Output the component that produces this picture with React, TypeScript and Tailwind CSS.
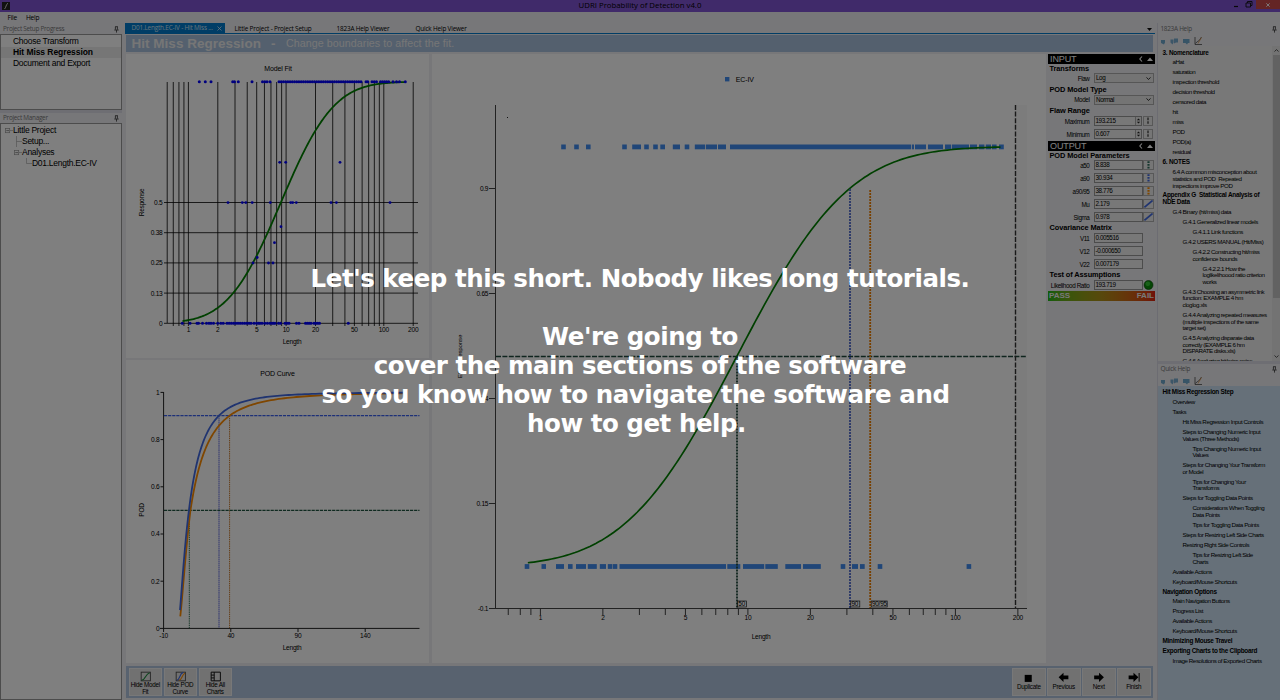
import React from "react";

/* ---------- maths for the probability curves ---------- */
function phi(z: number): number {
  const t = 1 / (1 + 0.3275911 * (Math.abs(z) / Math.SQRT2));
  const a = Math.abs(z) / Math.SQRT2;
  const erf =
    1 -
    ((((1.061405429 * t - 1.453152027) * t + 1.421413741) * t - 0.284496736) * t + 0.254829592) *
      t *
      Math.exp(-a * a);
  return z < 0 ? (1 - erf) / 2 : (1 + erf) / 2;
}

function curve(
  from: number,
  to: number,
  px: (v: number) => number,
  py: (v: number) => number,
  prob: (v: number) => number
): string {
  const n = 160;
  const pts: string[] = [];
  for (let i = 0; i <= n; i++) {
    const v = from * Math.pow(to / from, i / n);
    pts.push(`${px(v).toFixed(2)},${py(prob(v)).toFixed(2)}`);
  }
  return pts.join(" ");
}

const MU = 2.179;
const SIGMA = 0.978;
const pod = (v: number) => phi((Math.log(v) - MU) / SIGMA);
const podBound = (v: number) => {
  const d = Math.log(v) - 2.3;
  return phi(d / (d < 0 ? 0.87 : 1.06));
};

const LOG_TICKS = [0.7, 0.8, 0.9, 1, 2, 3, 4, 5, 6, 7, 8, 9, 10, 20, 30, 40, 50, 60, 70, 80, 90, 100, 200];
const LOG_LABELS = [1, 2, 5, 10, 20, 50, 100, 200];

/* ---------- charts ---------- */
const chartText = "font-['Liberation_Sans'] text-[6.6px] tracking-[-0.25px] fill-black";
const chartTitle = "font-['Liberation_Sans'] text-[7px] tracking-[-0.15px] fill-black";

const FIT_TOP: [number, number][] = [
  [199.3, 199.3], [205.3, 205.3], [211, 211], [232.7, 234.5], [238.3, 238.3], [252, 252], [262.5, 264.8],
  [267, 267], [270, 270], [279, 361], [366, 367.8], [372, 376.5], [380.5, 388.7], [393, 393],
  [396.5, 396.5], [399.5, 399.5], [405.3, 405.3],
];
const FIT_BOTTOM: [number, number][] = [
  [182.3, 182.3], [190, 190], [197, 198.5], [202.5, 202.5], [206.5, 209], [211, 213.5], [217.7, 217.7],
  [220.8, 220.8], [223.2, 223.2], [227, 249], [251, 254], [256.5, 258.5], [260, 262], [264.8, 270],
  [272, 273.5], [275, 276], [278.5, 280.5], [285, 289], [296.5, 299], [305.5, 311], [314, 319.5], [348.3, 348.3],
];
const FIT_MIDDLE: [number, number][] = [
  [279.7, 162.3], [285.7, 162.3], [340, 162.3], [228, 202.6], [242.3, 202.6], [245.8, 202.6], [252.2, 202.6],
  [270.3, 202.6], [290.7, 202.6], [292.7, 202.6], [296.3, 202.6], [331, 202.6], [336.4, 202.6], [390, 202.6],
  [281, 226.7], [274.5, 242.7], [257.2, 257.5], [253, 263], [268.5, 263], [273, 263],
];

function spread(ranges: [number, number][], step: number): number[] {
  const out: number[] = [];
  ranges.forEach(([a, b]) => {
    const n = Math.max(0, Math.round((b - a) / step));
    for (let i = 0; i <= n; i++) out.push(n ? a + ((b - a) * i) / n : a);
  });
  return out;
}

function ModelFit() {
  const px = (v: number) => 188.4 + 97.7 * Math.log10(v);
  const py = (p: number) => 323.3 - 241.6 * p;
  return (
    <svg className="block h-[304px] w-[303px]" viewBox="126 54 303 304">
      <g stroke="#000" strokeWidth="0.8">
        {[0.607, ...LOG_TICKS].map((t) => (
          <line key={t} x1={px(t)} x2={px(t)} y1="82" y2={t === 0.607 ? 323 : 326} />
        ))}
        {[0, 0.125, 0.25, 0.375, 0.5].map((t) => (
          <line key={t} x1="164" x2="418" y1={py(t)} y2={py(t)} />
        ))}
      </g>
      <polyline points={curve(0.87, 165, px, py, pod)} fill="none" stroke="#008000" strokeWidth="1.8" />
      <g fill="#0000ff">
        {spread(FIT_TOP, 2.2).map((x, i) => <circle key={i} cx={x} cy="81.7" r="1.5" />)}
        {spread(FIT_BOTTOM, 2.2).map((x, i) => <circle key={i} cx={x} cy="323.3" r="1.5" />)}
        {FIT_MIDDLE.map(([x, y], i) => <circle key={i} cx={x} cy={y} r="1.4" />)}
      </g>
      <text x="278" y="70.6" textAnchor="middle" className={chartTitle}>Model Fit</text>
      <text x="292" y="344.4" textAnchor="middle" className={chartText}>Length</text>
      <text transform="translate(143.8 202.5) rotate(-90)" textAnchor="middle" className={chartText}>Response</text>
      {LOG_LABELS.map((t) => (
        <text key={t} x={px(t)} y="332.4" textAnchor="middle" className={chartText}>{t}</text>
      ))}
      {[[0, "0"], [0.125, "0.13"], [0.25, "0.25"], [0.375, "0.38"], [0.5, "0.5"]].map(([v, s]) => (
        <text key={s} x="162.5" y={py(Number(v)) + 2.4} textAnchor="end" className={chartText}>{s}</text>
      ))}
    </svg>
  );
}

function PodCurve() {
  const px = (v: number) => 163.6 + (v + 10) * 1.344;
  const py = (p: number) => 628.4 - 236 * p;
  return (
    <svg className="block h-[303px] w-[303px]" viewBox="126 360 303 303">
      <path d="M163.6 392V632M160 628.4H419.5" stroke="#222" strokeWidth="1" fill="none" />
      <g stroke="#222" strokeWidth="1">
        {[0.2, 0.4, 0.6, 0.8, 1].map((t) => <line key={t} x1="160.5" x2="163.6" y1={py(t)} y2={py(t)} />)}
        {[40, 90, 140].map((t) => <line key={t} x1={px(t)} x2={px(t)} y1="628.4" y2="632" />)}
      </g>
      <line x1="189.3" x2="189.3" y1="510.3" y2="628" stroke="#2f6f4f" strokeWidth="1" strokeDasharray="1.4 0.8" />
      <line x1="219" x2="219" y1="415.7" y2="628" stroke="#7f88e8" strokeWidth="1.7" strokeDasharray="1.6 0.5" opacity=".7" />
      <line x1="229.6" x2="229.6" y1="415.7" y2="628" stroke="#c87828" strokeWidth="1" strokeDasharray="1.4 0.8" />
      <line x1="164" x2="419.5" y1="415.6" y2="415.6" stroke="#3a60f0" strokeWidth="1.4" strokeDasharray="3.2 0.9" />
      <line x1="164" x2="419.5" y1="510.4" y2="510.4" stroke="#1f5540" strokeWidth="1.2" strokeDasharray="3.2 0.9" />
      <polyline points={curve(2.4, 168, px, py, podBound)} fill="none" stroke="#ff8c00" strokeWidth="1.8" />
      <polyline points={curve(2.2, 168, px, py, pod)} fill="none" stroke="#4169e1" strokeWidth="1.8" />
      <text x="277.5" y="376" textAnchor="middle" className={chartTitle}>POD Curve</text>
      <text x="292" y="650.2" textAnchor="middle" className={chartText}>Length</text>
      <text transform="translate(143.6 510) rotate(-90)" textAnchor="middle" className={chartText}>POD</text>
      {[0, 0.2, 0.4, 0.6, 0.8, 1].map((v) => (
        <text key={v} x="159.5" y={py(v) + 2.4} textAnchor="end" className={chartText}>{v}</text>
      ))}
      {[-10, 40, 90, 140].map((v) => (
        <text key={v} x={px(v)} y="638" textAnchor="middle" className={chartText}>{v}</text>
      ))}
    </svg>
  );
}

const HIT_BARS: [number, number][] = [
  [561.2, 565.8], [574.2, 578.8], [586, 590.6], [622.2, 626.8], [632.2, 641], [644.2, 648.8], [653.2, 657.8],
  [660.3, 665], [672.8, 680], [684.7, 689.3], [694.8, 705.2], [706, 717], [718, 726], [730, 911], [911.8, 914],
  [915, 926], [928, 943], [945, 951], [951.8, 969], [970, 977], [979, 984.4], [985.8, 991], [992, 996.6], [999, 1003.8],
];
const MISS_BARS: [number, number][] = [
  [524.7, 529.3], [541.5, 546], [556, 564], [568, 572.6], [576, 586], [587.8, 596.8], [599.8, 606], [607.8, 612.3],
  [612.8, 617.3], [619.5, 726], [727.3, 740.3], [743, 764.2], [765.3, 777.8], [785.3, 801], [803, 820.8],
  [840.7, 845.3], [852, 858], [860, 864.7], [877.7, 882.3], [966.6, 971.2],
];

function MainChart() {
  const px = (v: number) => 540.4 + 207.5 * Math.log10(v);
  const py = (p: number) => 566.5 - 420 * p;
  return (
    <svg className="block h-[609px] w-[614px]" viewBox="432 54 614 609">
      <rect x="1015" y="105" width="12" height="503" fill="#f8f8f8" />
      <path d="M495.5 105V608.5M489 608.5H1027" stroke="#444" strokeWidth="1" fill="none" />
      <g stroke="#444" strokeWidth="1">
        {[0.15, 0.4, 0.65, 0.9].map((t) => <line key={t} x1="489" x2="495" y1={py(t)} y2={py(t)} />)}
        {LOG_TICKS.map((t) => <line key={t} x1={px(t)} x2={px(t)} y1="608.5" y2="615" />)}
      </g>
      <rect x="507" y="117" width="1" height="1" fill="#222" />
      <line x1="496" x2="1027" y1="356.5" y2="356.5" stroke="#1f4a3c" strokeWidth="1.6" strokeDasharray="5 1.4" />
      <line x1="1015.5" x2="1015.5" y1="105" y2="608" stroke="#333" strokeWidth="1.4" strokeDasharray="5 1.6" />
      <g fill="#418cf0">
        {HIT_BARS.map(([a, b]) => <rect key={a} x={a} y="144.5" width={b - a} height="4.8" />)}
        {MISS_BARS.map(([a, b]) => <rect key={a} x={a} y="564.1" width={b - a} height="4.8" />)}
        <rect x="725" y="77" width="4.4" height="4.4" />
      </g>
      <polyline points={curve(0.87, 165, px, py, pod)} fill="none" stroke="#008000" strokeWidth="1.7" />
      <line x1="737" x2="737" y1="356.5" y2="608" stroke="#1f4a3c" strokeWidth="1.8" strokeDasharray="1.9 1.1" />
      <line x1="850" x2="850" y1="189" y2="608" stroke="#4f6ad0" strokeWidth="1.8" strokeDasharray="1.9 1.1" />
      <line x1="870.2" x2="870.2" y1="190" y2="608" stroke="#f08000" strokeWidth="1.8" strokeDasharray="1.9 1.1" />
      {[[737.6, 9, "50"], [850.8, 9, "90"], [871.2, 16, "90/95"]].map(([x, w, s]) => (
        <g key={s}>
          <rect x={Number(x)} y="601" width={Number(w)} height="6" fill="none" stroke="#222" strokeWidth="0.7" />
          <text x={Number(x) + 0.7} y="606.2" className="fill-black font-['Liberation_Sans'] text-[6.4px] tracking-[-0.2px]">{s}</text>
        </g>
      ))}
      <text x="735.8" y="81.7" className={chartTitle}>EC-IV</text>
      <text x="761" y="639.2" textAnchor="middle" className={chartText}>Length</text>
      <text transform="translate(462 356.5) rotate(-90)" textAnchor="middle" className="fill-black font-['Liberation_Sans'] text-[6.2px] tracking-[-0.2px]">EC-IV Response</text>
      {LOG_LABELS.map((t) => (
        <text key={t} x={px(t)} y="620.2" textAnchor="middle" className={chartText}>{t}</text>
      ))}
      {[-0.1, 0.15, 0.4, 0.65, 0.9].map((v) => (
        <text key={v} x="488.3" y={py(v) + 2.3} textAnchor="end" className={chartText}>{v}</text>
      ))}
    </svg>
  );
}

/* ---------- small pieces ---------- */
function Pin() {
  return (
    <svg className="h-[7px] w-[5px] shrink-0" viewBox="0 0 5 7">
      <path d="M1.2 .7H3.8M1.4 .7V3.7M3.4 .7V3.7M.3 4H4.7M2.5 4V6.6" stroke="#333" strokeWidth=".8" fill="none" />
    </svg>
  );
}

function PanelHeader({ title, box }: { title: string; box: string }) {
  return (
    <div className={`flex shrink-0 items-center whitespace-nowrap pl-[3px] pr-[3px] pt-px ${box}`}>
      <span className="font-['Open_Sans'] text-[6.4px] leading-none tracking-[-0.28px] text-[#777]">{title}</span>
      <span className="ml-[4px] mr-[14px] h-[3px] flex-1 bg-[radial-gradient(#a8a8a8_0.6px,transparent_0.7px)] bg-[size:2px_1.5px]" />
      <Pin />
    </div>
  );
}

function HelpToolbar() {
  return (
    <div className="flex h-[12px] shrink-0 items-center pl-[2px] pt-px">
      <svg className="h-[10px] w-[46px]" viewBox="0 0 46 10">
        <path d="M1 4h4v2.5l-1 2-3-1.5z" fill="#6ea8cc" />
        <path d="M10.5 3.5h3v3l-1 2-2-2zM14 2.5h4v4h-2l-2 1z" fill="#79add0" />
        <path d="M23 3h6.5v4H28l-1 1.5-1.5-1.5H23z" fill="#6ea8cc" />
        <path d="M35 1v7.5h7" stroke="#333" strokeWidth=".7" fill="none" />
        <path d="M35.5 7.5c2-3 3-1.5 4-3.5l2-3" stroke="#333" strokeWidth=".7" fill="none" />
        <path d="M38 7.5l3.5-6" stroke="#e09a50" strokeWidth=".8" />
      </svg>
    </div>
  );
}

type HelpItem = [number, string];
const INDENT = ["pl-[5px]", "pl-[15px]", "pl-[25px]", "pl-[35px]", "pl-[45px]"];

function HelpList({ items }: { items: HelpItem[] }) {
  return (
    <div className="flex flex-col">
      {items.map(([level, text], i) => (
        <div
          key={i}
          className={`whitespace-pre pb-[3.4px] font-['Liberation_Sans'] leading-[6.6px] text-black ${INDENT[level]} ${
            level === 0 ? "text-[6.4px] font-bold tracking-[-0.24px]" : "text-[6.2px] tracking-[-0.43px]"
          }`}
        >
          {text}
        </div>
      ))}
    </div>
  );
}

const HANDBOOK: HelpItem[] = [
  [0, "3. Nomenclature"], [1, "aHat"], [1, "saturation"], [1, "inspection threshold"], [1, "decision threshold"],
  [1, "censored data"], [1, "hit"], [1, "miss"], [1, "POD"], [1, "POD(a)"], [1, "residual"], [0, "6. NOTES"],
  [1, "6.4 A common misconception about\nstatistics and POD  Repeated\ninspections improve POD"],
  [0, "Appendix G  Statistical Analysis of\nNDE Data"],
  [1, "G.4 Binary (hit/miss) data"], [2, "G.4.1 Generalized linear models"], [3, "G.4.1.1 Link functions"],
  [2, "G.4.2 USERS MANUAL (Hit/Miss)"], [3, "G.4.2.2 Constructing hit/miss\nconfidence bounds"],
  [4, "G.4.2.2.1 How the\nloglikelihoood ratio criterion\nworks"],
  [2, "G.4.3 Choosing an asymmetric link\nfunction: EXAMPLE 4 hm\ncloglog.xls"],
  [2, "G.4.4 Analyzing repeated measures\n(multiple inspections of the same\ntarget set)"],
  [2, "G.4.5 Analyzing disparate data\ncorrectly (EXAMPLE 6 hm\nDISPARATE disks.xls)"],
  [2, "G.4.6 Analyzing hit/miss noise"],
];

const QUICK: HelpItem[] = [
  [0, "Hit Miss Regression Step"], [1, "Overview"], [1, "Tasks"], [2, "Hit Miss Regression Input Controls"],
  [2, "Steps to Changing Numeric Input\nValues (Three Methods)"], [3, "Tips Changing Numeric Input\nValues"],
  [2, "Steps for Changing Your Transform\nor Model"], [3, "Tips for Changing Your\nTransforms"],
  [2, "Steps for Toggling Data Points"], [3, "Considerations When Toggling\nData Points"],
  [3, "Tips for Toggling Data Points"], [2, "Steps for Resizing Left Side Charts"],
  [2, "Resizing Right Side Controls"], [3, "Tips for Resizing Left Side\nCharts"],
  [1, "Available Actions"], [1, "Keyboard/Mouse Shortcuts"], [0, "Navigation Options"],
  [1, "Main Navigation Buttons"], [1, "Progress List"], [1, "Available Actions"], [1, "Keyboard/Mouse Shortcuts"],
  [0, "Minimizing Mouse Travel"], [0, "Exporting Charts to the Clipboard"], [1, "Image Resolutions of Exported Charts"],
];

function SectionBar({ title }: { title: string }) {
  return (
    <div className="flex h-[10px] shrink-0 items-center bg-black pl-[2px] pr-[2px]">
      <span className="flex-1 font-['Liberation_Sans'] text-[9px] leading-none tracking-[-0.1px] text-white">{title}</span>
      <svg className="h-[8px] w-[15px]" viewBox="0 0 15 8">
        <path d="M4 1.5L1.8 4L4 6.5" stroke="#fff" strokeWidth="1.1" fill="none" />
        <path d="M9 6L12 2.5L15 6z" fill="#fff" />
      </svg>
    </div>
  );
}

function GroupLabel({ text, box }: { text: string; box: string }) {
  return (
    <div className={`flex shrink-0 items-center whitespace-nowrap pl-[1.5px] font-['Liberation_Sans'] text-[7.4px] font-bold leading-none tracking-[-0.08px] ${box}`}>
      {text}
    </div>
  );
}

function Field({ label, value, kind, box }: { label: string; value: string; kind: string; box: string }) {
  const marks: Record<string, string> = { teal: "#2f6f5f", blue: "#4169e1", orange: "#ff8c00", gray: "#777" };
  return (
    <div className={`flex shrink-0 items-start font-['Liberation_Sans'] text-[6.3px] tracking-[-0.38px] ${box}`}>
      <span className="w-[41.5px] whitespace-nowrap pt-[1.5px] text-right leading-[8px]">{label}</span>
      {kind === "combo" ? (
        <div className="ml-[4.5px] flex h-[10.4px] w-[60px] items-center border border-[#acacac] bg-[#e8e8e8] pl-[1px] pr-[2px]">
          <span className="flex-1 leading-[8px]">{value}</span>
          <svg className="h-[3px] w-[5px]" viewBox="0 0 5 3"><path d="M.5 .4L2.5 2.5L4.5 .4" stroke="#222" strokeWidth=".9" fill="none" /></svg>
        </div>
      ) : (
        <div className={`ml-[4.5px] flex h-[9.8px] border border-[#999] bg-[#f0f0f0] pl-[0.5px] ${kind === "gray" ? "w-[48px]" : "w-[49px]"}`}>
          <span className="flex-1 leading-[7px]">{value}</span>
          {kind === "gray" && (
            <svg className="h-[8px] w-[6px] border-l border-[#aaa] bg-[#e8e8e8]" viewBox="0 0 6 8">
              <path d="M1 3L3 1L5 3zM1 5L3 7L5 5z" fill="#222" />
            </svg>
          )}
        </div>
      )}
      {marks[kind] && (
        <svg className={`h-[9.8px] border border-[#b0b0b0] bg-[#ececec] ${kind === "gray" ? "ml-[1px] w-[10px]" : "w-[11px]"}`} viewBox="0 0 9 8">
          <path d="M4.5 .3V8" stroke={marks[kind]} strokeWidth="2.2" strokeDasharray={kind === "gray" ? "3 1" : "1.8 1"} />
        </svg>
      )}
      {kind === "line" && (
        <svg className="h-[9.8px] w-[11px] border border-[#b0b0b0] bg-[#ececec]" viewBox="0 0 9 8">
          <path d="M.3 7.5L8.7 .5" stroke="#4169e1" strokeWidth="1.8" />
        </svg>
      )}
      {kind === "light" && (
        <svg className="h-[10px] w-[11px]" viewBox="0 0 11 10">
          <circle cx="5.5" cy="5" r="4.5" fill="#0b8d0b" stroke="#054005" strokeWidth=".6" />
          <circle cx="4.8" cy="3.8" r="2.4" fill="#3ed03e" opacity=".8" />
        </svg>
      )}
    </div>
  );
}

function ActionButton({ lines, icon }: { lines: string; icon: React.ReactNode }) {
  return (
    <div className="flex h-[28px] w-[33.5px] flex-col items-center border border-[#f0f0f0] bg-[#e2e2e2] pt-[2px]">
      <svg className="h-[11px] w-[13px] shrink-0" viewBox="0 0 12 10">{icon}</svg>
      <span className="whitespace-pre text-center font-['Liberation_Sans'] text-[6.3px] leading-[6.6px] tracking-[-0.28px]">{lines}</span>
    </div>
  );
}

const arrowRight = "M1 3.2H5.5V.8L10 5L5.5 9.2V6.8H1z";

const treeText = "font-['Liberation_Sans'] text-[8.5px] leading-[11px] tracking-[-0.27px] whitespace-nowrap";

function TreeNode({ text, pad, box, last }: { text: string; pad: string; box: boolean; last?: boolean }) {
  return (
    <div className={`flex h-[11px] items-center ${treeText} ${pad}`}>
      <svg className="h-[11px] w-[8px] shrink-0" viewBox="0 0 8 11">
        {box ? (
          <>
            <path d="M5 5.5H8" stroke="#aaa" strokeWidth=".7" />
            <rect x=".5" y="3.5" width="4.2" height="4.2" fill="#fff" stroke="#999" strokeWidth=".7" />
            <path d="M1.3 5.6H4" stroke="#666" strokeWidth=".7" />
          </>
        ) : (
          <path d={last ? "M2.5 0V5.5H8" : "M2.5 0V11M2.5 5.5H8"} stroke="#aaa" strokeWidth=".7" fill="none" />
        )}
      </svg>
      {text}
    </div>
  );
}

const tabText = "font-['Open_Sans'] text-[6.4px] leading-none tracking-[-0.18px] whitespace-nowrap";

export default function App() {
  return (
    <div className="relative flex h-[700px] w-[1280px] flex-col overflow-hidden bg-[#eeeef2] text-black">
      {/* window title bar */}
      <div className="flex h-[12px] shrink-0 bg-[#8055d5]">
        <div className="w-[24px] pl-[2px] pt-[1.5px]">
          <svg className="block h-[8px] w-[8px]" viewBox="0 0 8 8">
            <rect width="8" height="8" fill="#222" />
            <path d="M2.5 7C4 6 4 2 6 1.2" stroke="#ddd" strokeWidth=".9" fill="none" />
          </svg>
        </div>
        <div className="flex-1 pl-[24px] text-center font-['Open_Sans'] text-[7.8px] leading-[10px]">
          UDRI Probability of Detection v4.0
        </div>
        <svg className="h-[9px] w-[24px]" viewBox="0 0 24 9">
          <path d="M2 6.5H6" stroke="#111" strokeWidth="1.2" />
          <path d="M14 3H18.5V7H14zM15.5 3V1.5H20V5.5H18.5" stroke="#111" strokeWidth=".9" fill="none" />
        </svg>
        <div className="flex h-[9px] w-[24px] items-center justify-center bg-[#c94a4a]">
          <svg className="h-[4px] w-[4px]" viewBox="0 0 4 4"><path d="M.3 .3L3.7 3.7M3.7 .3L.3 3.7" stroke="#fff" strokeWidth=".9" /></svg>
        </div>
      </div>
      {/* menu */}
      <div className="flex h-[11px] shrink-0 items-center gap-[9px] pl-[7.5px] pt-px font-['Open_Sans'] text-[6.6px] leading-none tracking-[-0.25px]">
        <span>File</span>
        <span>Help</span>
      </div>

      <div className="flex min-h-0 flex-1">
        {/* left dock */}
        <div className="flex w-[122px] shrink-0 flex-col">
          <PanelHeader title="Project Setup Progress" box="h-[11px]" />
          <div className="h-[76px] shrink-0 border border-[#999] bg-white">
            <div className={`mt-px pl-[12px] ${treeText}`}>Choose Transform</div>
            <div className="bg-[#ececec] pl-[12px] font-['Liberation_Sans'] text-[8.5px] font-bold leading-[11px] tracking-[-0.07px]">Hit Miss Regression</div>
            <div className={`pl-[12px] ${treeText}`}>Document and Export</div>
          </div>
          <div className="h-[3px] shrink-0 bg-[#dcdce6]" />
          <PanelHeader title="Project Manager" box="h-[10px]" />
          <div className="flex-1 border border-[#999] bg-white pt-px">
            <TreeNode text="Little Project" pad="pl-[4px]" box />
            <TreeNode text="Setup..." pad="pl-[13px]" box={false} />
            <TreeNode text="Analyses" pad="pl-[13px]" box />
            <TreeNode text="D01.Length.EC-IV" pad="pl-[23px]" box={false} last />
          </div>
        </div>

        {/* document area */}
        <div className="ml-[3px] flex w-[1030px] shrink-0 flex-col">
          <div className="flex h-[11px] shrink-0 border-b border-[#007acc]">
            <div className={`flex w-[100px] items-center bg-[#007acc] pl-[6.5px] pr-[3px] pt-px text-[#cfe6f8] ${tabText}`}>
              <span className="flex-1">D01.Length.EC-IV - Hit Miss ...</span>
              <svg className="h-[5px] w-[5px]" viewBox="0 0 5 5"><path d="M.5 .5L4.5 4.5M4.5 .5L.5 4.5" stroke="#d8ecfb" strokeWidth=".8" /></svg>
            </div>
            <div className={`flex w-[102px] items-center pl-[9.5px] pt-[1.5px] ${tabText}`}>Little Project - Project Setup</div>
            <div className={`flex w-[79px] items-center pl-[9.5px] pt-[1.5px] ${tabText}`}>1823A Help Viewer</div>
            <div className={`flex flex-1 items-center pl-[9.5px] pt-[1.5px] ${tabText}`}>Quick Help Viewer</div>
            <svg className="mt-[5px] h-[3px] w-[8px]" viewBox="0 0 8 3"><path d="M0 0H5L2.5 3z" fill="#111" /></svg>
          </div>
          <div className="ml-px mt-px flex h-[17px] w-[1027px] shrink-0 items-center whitespace-nowrap bg-[#a8c0dc] pl-[5.5px] font-['Liberation_Sans'] leading-none text-[#ececec]">
            <span className="text-[13.5px] font-bold tracking-[0.02px]">Hit Miss Regression</span>
            <span className="ml-[10px] text-[13.5px] font-bold">-</span>
            <span className="ml-[10.5px] text-[10.7px] tracking-[0.06px]">Change boundaries to affect the fit.</span>
          </div>
          <div className="ml-px mt-[2px] flex h-[610px] shrink-0">
            <div className="flex w-[306px] shrink-0 flex-col gap-[2px]">
              <div className="h-[304px] w-[303px] bg-white"><ModelFit /></div>
              <div className="h-[303px] w-[303px] bg-white"><PodCurve /></div>
            </div>
            <div className="h-[609px] w-[614px] bg-white"><MainChart /></div>
            <div className="ml-[2px] flex w-[107px] shrink-0 flex-col">
              <SectionBar title="INPUT" />
              <GroupLabel text="Transforms" box="h-[9px]" />
              <Field label="Flaw" value="Log" kind="combo" box="h-[11px]" />
              <GroupLabel text="POD Model Type" box="h-[10.5px]" />
              <Field label="Model" value="Normal" kind="combo" box="h-[10.5px]" />
              <GroupLabel text="Flaw Range" box="h-[11px]" />
              <Field label="Maximum" value="193.215" kind="gray" box="h-[13px]" />
              <Field label="Minimum" value="0.607" kind="gray" box="h-[12px]" />
              <SectionBar title="OUTPUT" />
              <GroupLabel text="POD Model Parameters" box="h-[9px]" />
              <Field label="a50" value="8.838" kind="teal" box="h-[13px]" />
              <Field label="a90" value="30.934" kind="blue" box="h-[13px]" />
              <Field label="a90/95" value="38.776" kind="orange" box="h-[13px]" />
              <Field label="Mu" value="2.179" kind="line" box="h-[13px]" />
              <Field label="Sigma" value="0.978" kind="line" box="h-[11px]" />
              <GroupLabel text="Covariance Matrix" box="h-[10px]" />
              <Field label="V11" value="0.005516" kind="plain" box="h-[13px]" />
              <Field label="V12" value="-0.000650" kind="plain" box="h-[13px]" />
              <Field label="V22" value="0.007179" kind="plain" box="h-[10.5px]" />
              <GroupLabel text="Test of Assumptions" box="h-[10.5px]" />
              <Field label="Likelihood Ratio" value="193.719" kind="light" box="h-[11px]" />
              <div className="flex h-[10px] shrink-0 items-center justify-between bg-linear-to-r from-[#18b818] via-[#b09018] to-[#e02010] pl-[1px] pr-px font-['Liberation_Sans'] text-[8px] font-bold leading-none text-[#f0f0f0]">
                <span>PASS</span>
                <span>FAIL</span>
              </div>
            </div>
          </div>
          <div className="ml-px mt-[2px] flex h-[32px] w-[1027px] shrink-0 items-start bg-[#b0c4de] pl-[2.5px] pr-[2.5px] pt-[2px]">
            <div className="flex gap-[1.5px]">
              <ActionButton lines={"Hide Model\nFit"} icon={<><rect x="2" y="1" width="8.5" height="8" fill="none" stroke="#444" strokeWidth=".8" /><path d="M2.5 8.5C6.5 8 5.5 2.5 10 1.5" stroke="#1c8a3c" strokeWidth="1" fill="none" /></>} />
              <ActionButton lines={"Hide POD\nCurve"} icon={<><rect x="2" y="1" width="8.5" height="8" fill="none" stroke="#444" strokeWidth=".8" /><path d="M2.5 8.5C6 8 4.5 2.5 8.5 1.2" stroke="#4169e1" strokeWidth="1" fill="none" /><path d="M4.5 8.5C8 8 7 3 10.2 2" stroke="#ff8c00" strokeWidth="1" fill="none" /></>} />
              <ActionButton lines={"Hide All\nCharts"} icon={<path d="M2 1H10.5V9H2zM4.8 1V9M2 3.7H4.8M2 6.3H4.8" stroke="#111" strokeWidth=".9" fill="none" />} />
            </div>
            <div className="flex-1" />
            <div className="flex gap-[1.5px] [&_span]:pt-[1.5px]">
              <ActionButton lines="Duplicate" icon={<rect x="2.5" y="3.5" width="6.5" height="6.5" fill="#000" />} />
              <ActionButton lines="Previous" icon={<path d={arrowRight} transform="translate(11.5 .8) scale(-1 1)" fill="#000" />} />
              <ActionButton lines="Next" icon={<path d={arrowRight} transform="translate(1 .8)" fill="#000" />} />
              <ActionButton lines="Finish" icon={<g transform="translate(.5 .8)"><path d={arrowRight} fill="#000" /><path d="M10.7 1V9" stroke="#000" strokeWidth=".9" /></g>} />
            </div>
          </div>
        </div>

        {/* right dock */}
        <div className="ml-[1.5px] flex min-w-0 flex-1 flex-col border-l border-[#d8d8e4]">
          <PanelHeader title="1823A Help" box="h-[11px]" />
          <HelpToolbar />
          <div className="flex h-[315px] shrink-0 overflow-hidden">
            <div className="min-w-0 flex-1 overflow-hidden bg-[#f0f0f0] pt-[3.5px]"><HelpList items={HANDBOOK} /></div>
            <div className="flex w-[8px] flex-col items-center bg-[#e6e6e6]">
              <svg className="my-[3px] h-[3px] w-[5px] shrink-0" viewBox="0 0 5 3"><path d="M.5 2.5L2.5 .6L4.5 2.5" stroke="#444" strokeWidth=".9" fill="none" /></svg>
              <div className="h-[243px] w-[7px] shrink-0 bg-[#c4c4c4]" />
              <div className="flex-1" />
              <svg className="mb-[3px] h-[3px] w-[5px] shrink-0" viewBox="0 0 5 3"><path d="M.5 .5L2.5 2.4L4.5 .5" stroke="#444" strokeWidth=".9" fill="none" /></svg>
            </div>
          </div>
          <div className="h-[3px] shrink-0 bg-[#dcdce6]" />
          <PanelHeader title="Quick Help" box="h-[10px]" />
          <HelpToolbar />
          <div className="flex-1 overflow-hidden bg-[#cce0f2] pt-[3.2px]"><HelpList items={QUICK} /></div>
        </div>
      </div>

      {/* dimming layer with the tutorial message */}
      <div className="absolute inset-0 flex flex-col items-center bg-black/50 pt-[264px] font-['DejaVu_Sans'] text-[24.5px] font-bold leading-[29px] tracking-[-0.46px] text-white">
        <div className="whitespace-nowrap">Let&apos;s keep this short. Nobody likes long tutorials.</div>
        <div className="h-[29px]" />
        <div className="whitespace-nowrap">We&apos;re going to</div>
        <div className="whitespace-nowrap">cover the main sections of the software</div>
        <div className="whitespace-nowrap pr-[9px]">so you know how to navigate the software and</div>
        <div className="whitespace-nowrap pr-[7px]">how to get help.</div>
      </div>
    </div>
  );
}
